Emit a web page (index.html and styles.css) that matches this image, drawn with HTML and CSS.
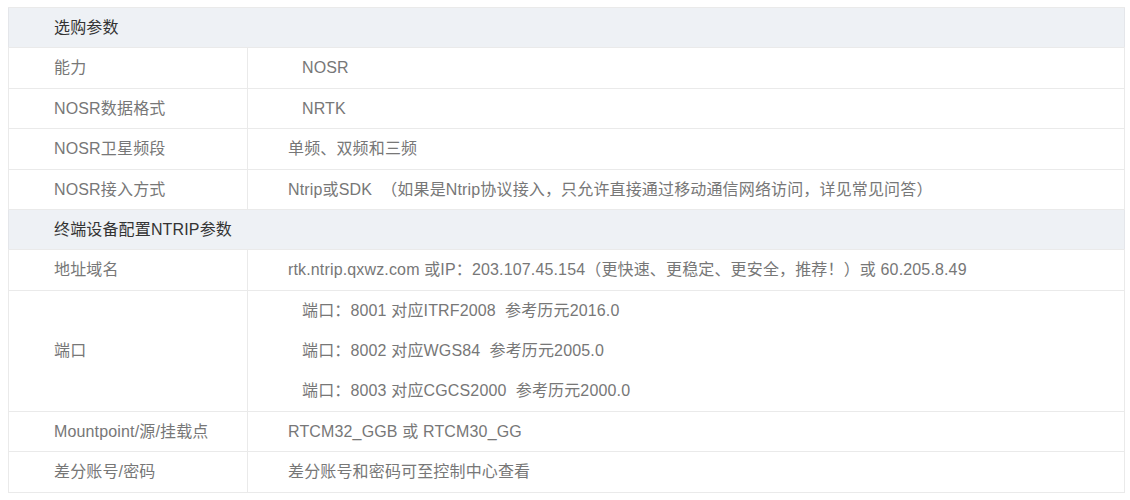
FILE: index.html
```html
<!DOCTYPE html>
<html lang="zh-CN">
<head>
<meta charset="utf-8">
<title>选购参数</title>
<link rel="stylesheet" href="styles.css">
</head>
<body>
<table class="spec">
  <colgroup><col class="c1"><col class="c2"></colgroup>
  <tbody>
    <tr class="head"><td colspan="2">选购参数</td></tr>
    <tr><td class="k">能力</td><td class="v"><span class="ind">NOSR</span></td></tr>
    <tr><td class="k">NOSR数据格式</td><td class="v"><span class="ind">NRTK</span></td></tr>
    <tr><td class="k">NOSR卫星频段</td><td class="v">单频、双频和三频</td></tr>
    <tr><td class="k">NOSR接入方式</td><td class="v">Ntrip或SDK &nbsp;（如果是Ntrip协议接入，只允许直接通过移动通信网络访问，详见常见问答）</td></tr>
    <tr class="head"><td colspan="2">终端设备配置NTRIP参数</td></tr>
    <tr><td class="k">地址域名</td><td class="v">rtk.ntrip.qxwz.com 或IP：203.107.45.154（更快速、更稳定、更安全，推荐！）或 60.205.8.49</td></tr>
    <tr><td class="k">端口</td><td class="v ports">
      <p class="port">端口：8001 对应ITRF2008 &nbsp;参考历元2016.0</p>
      <p class="port">端口：8002 对应WGS84 &nbsp;参考历元2005.0</p>
      <p class="port">端口：8003 对应CGCS2000 &nbsp;参考历元2000.0</p>
    </td></tr>
    <tr><td class="k">Mountpoint/源/挂载点</td><td class="v">RTCM32_GGB 或 RTCM30_GG</td></tr>
    <tr><td class="k">差分账号/密码</td><td class="v">差分账号和密码可至控制中心查看</td></tr>
  </tbody>
</table>
</body>
</html>
```
FILE: styles.css
```css
html, body {
  margin: 0;
  padding: 0;
  background: #ffffff;
}
body {
  padding: 7px 0 0 8px;
  font-family: "Liberation Sans", "Noto Sans CJK SC", sans-serif;
  font-size: 16px;
  letter-spacing: 0.15px;
  color: #777777;
}
.spec {
  width: 1117px;
  border-collapse: collapse;
  border: 1px solid #e4e6ea;
  table-layout: fixed;
}
.c1 { width: 239px; }
.spec td {
  border: 1px solid #eaeaea;
  padding: 8px 10px;
  line-height: 23.4px;
  vertical-align: middle;
  white-space: nowrap;
}
.spec td.k { padding-left: 45px; }
.spec td.v { padding-left: 40px; }
.ind { display: inline-block; padding-left: 14px; }
.spec tr.head td {
  background: #eef1f5;
  color: #333333;
  padding-left: 45px;
  border-left: 0;
  border-right: 0;
}
.ports .port {
  display: block;
  margin: 16px 0 0;
  padding-left: 14px;
  line-height: 24px;
}
.ports .port:first-child { margin-top: 0; }
```
